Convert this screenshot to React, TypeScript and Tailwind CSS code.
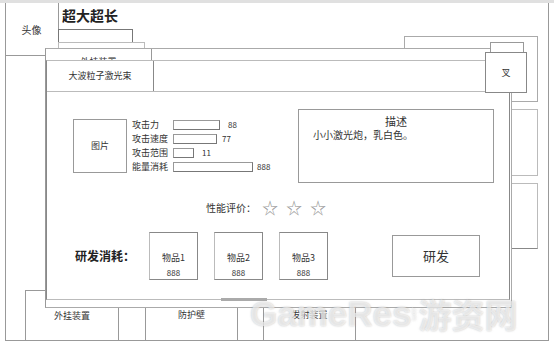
const stats = [
  { label: "攻击力", bar: "w-[47px]", gap: "ml-[8px]", value: "88" },
  { label: "攻击速度", bar: "w-[44px]", gap: "ml-[5px]", value: "77" },
  { label: "攻击范围", bar: "w-[21px]", gap: "ml-[8px]", value: "11" },
  { label: "能量消耗", bar: "w-[80px]", gap: "ml-[4px]", value: "888" },
];

const items = ["物品1", "物品2", "物品3"];

const tabs = [
  { label: "外挂装置", cls: "w-[94px] border-l border-t" },
  { label: "", cls: "w-[27px]" },
  { label: "防护壁", cls: "w-[92px]" },
  { label: "", cls: "w-[26px]" },
  { label: "发射装置", cls: "w-[92px]" },
];

export default function App() {
  return (
    <div className="relative h-[346px] w-[554px] overflow-hidden bg-white font-['Noto_Sans_CJK_SC',sans-serif] text-[#333]">
      <div className="absolute left-0 top-0 h-[3px] w-full bg-[#e0e0e0]" />
      {/* outer frame */}
      <div className="absolute left-[5px] top-[3px] h-[338px] w-[544px] border-x border-b border-[#999]" />
      <div className="absolute left-[5px] top-[3px] flex h-[53px] w-[54px] items-center justify-center border-b border-r border-[#999] text-[10px]">
        头像
      </div>
      <div className="absolute left-[62px] top-[5px] text-[14px] font-bold leading-[20px] text-[#222]">超大超长</div>
      <div className="absolute left-[58px] top-[29px] h-[14px] w-[75px] border border-[#777]" />
      <div className="absolute left-[58px] top-[42px] h-[30px] w-[87px] border border-[#bbb]" />

      {/* windows behind */}
      <div className="absolute left-[404px] top-[36px] h-[66px] w-[134px] border border-[#aaa]" />
      <div className="absolute left-[500px] top-[109px] h-[67px] w-[38px] border border-[#bbb]" />
      <div className="absolute left-[500px] top-[183px] h-[66px] w-[38px] border border-[#bbb] border-b-[#888]" />

      <div className="absolute left-[25px] top-[290px] flex h-[50px] text-[9px]">
        {tabs.map((t, i) => (
          <div key={i} className={`flex justify-center border-r border-[#999] pt-[19px] leading-[12px] ${t.cls}`}>
            {t.label}
          </div>
        ))}
      </div>

      <div className="absolute left-[45px] top-[48px] h-[260px] w-[467px] border border-[#aaa] border-l-[#999] bg-white">
        <div className="flex h-[20px] w-[106px] justify-center border-r border-[#999] pt-[7px] text-[9px] leading-[12px]">
          外挂装置
        </div>
      </div>
      <div className="absolute left-[490px] top-[42px] h-[14px] w-[34px] border border-[#999] bg-white" />

      {/* dialog */}
      <div className="absolute left-[46px] top-[60px] h-[240px] w-[464px] border border-[#bbb] border-l-[#888] border-r-[#888] bg-white">
        <div className="flex h-[31px] border-b border-[#bbb]">
          <div className="flex w-[107px] items-center justify-center border-r border-[#888] text-[9px]">大波粒子激光束</div>
        </div>

        <div className="mt-[17px] flex items-start">
          <div className="ml-[26px] mt-[10px] flex h-[54px] w-[54px] items-center justify-center border border-[#999] text-[9px]">
            图片
          </div>
          <div className="ml-[5px] mt-[9px] flex flex-col">
            {stats.map((s) => (
              <div key={s.label} className="flex h-[14px] items-center text-[9px]">
                <span className="w-[41px] leading-[14px]">{s.label}</span>
                <span className={`h-[10px] border border-[#999] border-b-[#777] border-r-[#777] ${s.bar}`} />
                <span className={`text-[8px] ${s.gap}`}>{s.value}</span>
              </div>
            ))}
          </div>
          <div className="ml-auto mr-[15px] h-[74px] w-[196px] border border-[#999] pt-[5px]">
            <div className="text-center text-[11px] leading-[13px]">描述</div>
            <div className="pl-[14px] text-[10px] leading-[13px]">小小激光炮，乳白色。</div>
          </div>
        </div>

        <div className="ml-[159px] mt-[16px] flex h-[16px] items-center">
          <span className="text-[10px]">性能评价：</span>
          <div className="ml-[2px] flex text-[16px] leading-[16px] text-[#999]">
            <span className="w-[24px] text-center">☆</span>
            <span className="w-[24px] text-center">☆</span>
            <span className="w-[24px] text-center">☆</span>
          </div>
        </div>

        <div className="mt-[17px] flex items-start">
          <div className="ml-[28px] flex h-[48px] w-[74px] items-center text-[12px] font-bold text-[#222]">研发消耗：</div>
          <div className="flex gap-[16px]">
            {items.map((it) => (
              <div key={it} className="flex h-[48px] w-[49px] flex-col items-center border border-[#888] border-l-[#bbb] pt-[19px] text-[9px] leading-[12px]">
                <span>{it}</span>
                <span className="mt-[3px] text-[8px]">888</span>
              </div>
            ))}
          </div>
          <div className="ml-[64px] mt-[3px] flex h-[42px] w-[88px] items-center justify-center border border-[#999] text-[13px]">
            研发
          </div>
        </div>
      </div>

      <div className="absolute left-[485px] top-[52px] flex h-[41px] w-[42px] items-center justify-center border border-[#888] bg-white text-[9px]">
        叉
      </div>
      <div className="absolute left-[221px] top-[298px] h-[3px] w-[46px] bg-[#aaa]" />

      {/* watermark */}
      <div className="pointer-events-none absolute left-[250px] top-[294px] flex items-center text-white/60 [text-shadow:0_0_2px_rgba(150,150,150,0.6)]">
        <span className="font-['Liberation_Sans',sans-serif] text-[35px] font-bold leading-[40px]">GameRes</span>
        <span className="mx-[3px] text-[6px] leading-[7px] [writing-mode:vertical-rl]">.com</span>
        <span className="text-[33px] font-bold leading-[40px]">游资网</span>
      </div>
    </div>
  );
}
